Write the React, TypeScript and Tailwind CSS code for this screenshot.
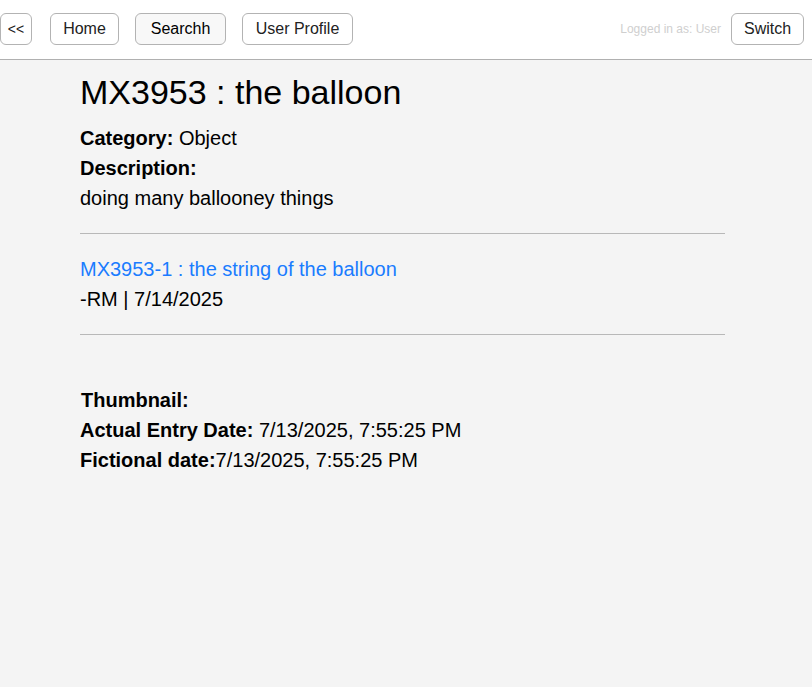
import React from "react";

const btn =
  "h-8 px-3 rounded-md border border-[#b3b3b3] bg-white text-[16px] text-[#222] leading-none";

export default function App() {
  return (
    <div className="min-h-[687px] bg-[#f4f4f4] font-['Liberation_Sans',Arial,sans-serif] text-black">
      <header className="h-[60px] bg-white border-b border-[#b0b0b0] flex items-center pb-px">
        <div className="flex items-center gap-4 flex-1">
          <button className="h-8 w-8 rounded-md border border-[#b3b3b3] bg-white text-[14px] text-[#222] leading-none">
            &lt;&lt;
          </button>
          <button className={btn + " ml-0.5 w-[69px] px-0"}>Home</button>
          <button className="h-8 w-[91px] rounded-md border border-[#b3b3b3] bg-[#f8f8f8] text-[16px] text-black leading-none">
            Searchh
          </button>
          <button className={btn + " w-[111px] px-0"}>User Profile</button>
        </div>
        <div className="flex items-center gap-[10px] pr-2">
          <span className="text-[12px] text-[#cfcfcf]">Logged in as: User</span>
          <button className={btn + " w-[73px] px-0"}>Switch</button>
        </div>
      </header>
      <main className="ml-[80px] w-[645px] pt-[12px]">
        <h1 className="text-[34px] leading-[40px] mb-[11px]">MX3953 : the balloon</h1>
        <div className="text-[20px] leading-[30px]">
          <div>
            <span className="font-bold">Category:</span> Object
          </div>
          <div className="font-bold">Description:</div>
          <div>doing many ballooney things</div>
        </div>
        <hr className="mt-[20px] border-0 border-t border-[#b8b8b8]" />
        <div className="pt-[20px] pb-[20px] text-[20px] leading-[30px]">
          <div className="text-[#1a7cff]">MX3953-1 : the string of the balloon</div>
          <div>-RM | 7/14/2025</div>
        </div>
        <hr className="border-0 border-t border-[#b8b8b8]" />
        <div className="pt-[50px] text-[20px] leading-[30px]">
          <div className="font-bold pl-px">Thumbnail:</div>
          <div>
            <span className="font-bold">Actual Entry Date:</span> 7/13/2025, 7:55:25 PM
          </div>
          <div>
            <span className="font-bold">Fictional date:</span>7/13/2025, 7:55:25 PM
          </div>
        </div>
      </main>
    </div>
  );
}
